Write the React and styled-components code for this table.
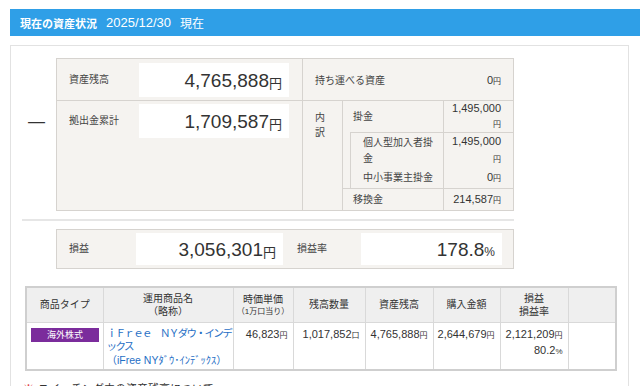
import React from "react";
import styled, { createGlobalStyle } from "styled-components";

// Global
//
//

const GlobalStyle = createGlobalStyle`
  html, body {
    margin: 0;
    padding: 0;
    overflow: hidden;
    background: #fff;
  }
  body {
    font-family: "Liberation Sans", "Noto Sans CJK JP", sans-serif;
    color: #333;
  }
  * { box-sizing: border-box; }
`;

// Component Stylesheet
//
//

const Page = styled.div`
  padding: 9px 0 0 10px;
`;

const TitleBar = styled.div`
  height: 27px;
  background: #2f9fe7;
  color: #fff;
  display: flex;
  align-items: center;
  gap: 9px;
  padding-left: 10px;
  font-size: 12px;
  b { font-weight: bold; font-size: 11px; }
  .date { font-size: 13px; }
`;

const Panel = styled.div`
  margin-top: 9px;
  width: 619px;
  border: 1px solid #e2e2e2;
  padding: 12px 0 30px 0;
`;

const TopSection = styled.div`
  display: flex;
`;

const MinusCol = styled.div`
  width: 45px;
  padding: 56px 0 0 6px;
  display: flex;
  justify-content: center;
  align-items: flex-start;
  font-size: 17px;
  line-height: 16px;
  color: #333;
`;

const SummaryTable = styled.div`
  width: 458px;
  border: 1px solid #d6d3cf;
  background: #f5f3f0;
  display: flex;
`;

const LeftGroup = styled.div`
  width: 246px;
  border-right: 1px solid #d6d3cf;
  display: flex;
  flex-direction: column;
`;

const SumRow = styled.div`
  display: flex;
  align-items: ${({ $top }) => ($top ? "flex-start" : "center")};
  height: ${({ $top }) => ($top ? "auto" : "42px")};
  flex: ${({ $top }) => ($top ? 1 : "none")};
  padding-top: ${({ $top }) => ($top ? "3px" : "0")};
  border-bottom: ${({ $top }) => ($top ? "none" : "1px solid #d6d3cf")};
`;

const Label = styled.div`
  width: ${({ $w }) => $w}px;
  padding-left: 12px;
  font-size: 10px;
  line-height: ${({ $lh }) => $lh || 14}px;
  color: #444;
`;

const ValueBox = styled.div`
  width: ${({ $w }) => $w}px;
  height: ${({ $h }) => $h}px;
  background: #fff;
  display: flex;
  align-items: center;
  justify-content: flex-end;
  padding: 2px 7px 0 0;
  font-size: 19px;
  color: #333;
  .unit {
    font-size: 13px;
    margin-top: 3px;
  }
`;

const RightGroup = styled.div`
  flex: 1;
  display: flex;
  flex-direction: column;
`;

const PortableRow = styled.div`
  height: 42px;
  border-bottom: 1px solid #d6d3cf;
  display: flex;
  align-items: center;
  justify-content: space-between;
  padding: 0 12px;
  font-size: 10px;
  color: #444;
`;

const SmallNum = styled.span`
  font-size: 11px;
  color: #333;
  .unit { font-size: 8px; }
`;

const Breakdown = styled.div`
  flex: 1;
  display: flex;
`;

const BreakdownHead = styled.div`
  width: 40px;
  border-right: 1px solid #d6d3cf;
  padding: 9px 0 0 12px;
  font-size: 10px;
  line-height: 15px;
  color: #444;
`;

const BreakdownBody = styled.div`
  flex: 1;
  display: flex;
  flex-direction: column;
`;

const SubBlock = styled.div`
  margin-left: 7px;
  border-left: 1px solid #d6d3cf;
  border-top: 1px solid #d6d3cf;
`;

const BRow = styled.div`
  display: flex;
  align-items: stretch;
  height: ${({ $h }) => $h}px;
  border-top: ${({ $line }) => ($line ? "1px solid #d6d3cf" : "none")};
`;

const BLabel = styled.div`
  flex: 1;
  display: flex;
  align-items: center;
  padding: 0 6px 0 ${({ $pad }) => $pad}px;
  font-size: 10px;
  line-height: 16px;
  color: #444;
`;

const BValue = styled.div`
  width: 70px;
  border-left: 1px solid #d6d3cf;
  display: flex;
  align-items: center;
  justify-content: flex-end;
  padding: 0 12px 0 6px;
  font-size: 11px;
  line-height: ${({ $lh }) => $lh || 15}px;
  color: #333;
  > span {
    display: block;
    width: 100%;
    text-align: right;
  }
  .unit { font-size: 8px; }
`;

const Separator = styled.div`
  margin: 8px 0 0 11px;
  width: 492px;
  border-top: 2px solid #e6e6e6;
`;

const ProfitRow = styled.div`
  margin: 8px 0 0 45px;
  width: 458px;
  height: 40px;
  border: 1px solid #d6d3cf;
  background: #f5f3f0;
  display: flex;
  align-items: center;
`;

const ProfitRateLabel = styled(Label)`
  margin-left: 14px;
  padding-left: 0;
`;

const ProductTable = styled.table`
  margin: 17px 0 0 14px;
  width: 590px;
  border-collapse: collapse;
  table-layout: fixed;
  border: 2px solid #cfcfcf;

  th {
    height: 35px;
    background: #efefef;
    border: 1px solid #d9d9d9;
    font-size: 10px;
    font-weight: normal;
    line-height: 13px;
    color: #333;
    padding: 0 2px;
  }
  th small {
    display: block;
    font-size: 8px;
    line-height: 11px;
  }
  td {
    height: 48px;
    border: 1px solid #d9d9d9;
    vertical-align: top;
    font-size: 11px;
    line-height: 15px;
    padding: 4px 5px 0 4px;
    text-align: right;
    color: #333;
  }
  td .unit { font-size: 8px; }
`;

const Badge = styled.div`
  width: 68px;
  height: 14px;
  margin: 1px auto 0;
  background: #7b2c9c;
  color: #fff;
  font-size: 9px;
  line-height: 14px;
  text-align: center;
`;

const FundName = styled.td`
  && {
    text-align: left;
    padding: 4px 0 0 3px;
    font-size: 10.5px;
    line-height: 13.5px;
    color: #1f6fc5;
  }
  .name {
    letter-spacing: -1.6px;
  }
`;

const Note = styled.div`
  margin: 9px 0 0 12px;
  font-size: 11px;
  color: #333;
  .mark {
    color: #e03a3a;
    margin-right: 4px;
  }
`;

// Component declaration
//
//

const Unit = ({ children, size }) => (
  <span className="unit" style={size ? { fontSize: size } : undefined}>{children}</span>
);

export default function App() {
  return (
    <Page>
      <GlobalStyle />
      <TitleBar>
        <b>現在の資産状況</b>
        <span className="date">2025/12/30</span>
        <span>現在</span>
      </TitleBar>
      <Panel>
        <TopSection>
          <MinusCol>—</MinusCol>
          <SummaryTable>
            <LeftGroup>
              <SumRow>
                <Label $w={82}>資産残高</Label>
                <ValueBox $w={150} $h={34}>4,765,888<Unit>円</Unit></ValueBox>
              </SumRow>
              <SumRow $top>
                <Label $w={82} $lh={34}>拠出金累計</Label>
                <ValueBox $w={150} $h={34}>1,709,587<Unit>円</Unit></ValueBox>
              </SumRow>
            </LeftGroup>
            <RightGroup>
              <PortableRow>
                <span>持ち運べる資産</span>
                <SmallNum>0<Unit>円</Unit></SmallNum>
              </PortableRow>
              <Breakdown>
                <BreakdownHead>内<br />訳</BreakdownHead>
                <BreakdownBody>
                  <BRow $h={31}>
                    <BLabel $pad={10}>掛金</BLabel>
                    <BValue><span>1,495,000<Unit>円</Unit></span></BValue>
                  </BRow>
                  <SubBlock>
                    <BRow $h={35}>
                      <BLabel $pad={12}>個人型加入者掛金</BLabel>
                      <BValue $lh={17}><span>1,495,000<Unit>円</Unit></span></BValue>
                    </BRow>
                    <BRow $h={20}>
                      <BLabel $pad={12}>中小事業主掛金</BLabel>
                      <BValue><span>0<Unit>円</Unit></span></BValue>
                    </BRow>
                  </SubBlock>
                  <BRow $h={22} $line>
                    <BLabel $pad={10}>移換金</BLabel>
                    <BValue><span>214,587<Unit>円</Unit></span></BValue>
                  </BRow>
                </BreakdownBody>
              </Breakdown>
            </RightGroup>
          </SummaryTable>
        </TopSection>

        <Separator />

        <ProfitRow>
          <Label $w={79}>損益</Label>
          <ValueBox $w={147} $h={32}>3,056,301<Unit>円</Unit></ValueBox>
          <ProfitRateLabel $w={64}>損益率</ProfitRateLabel>
          <ValueBox $w={141} $h={32}>178.8<Unit size="12px">%</Unit></ValueBox>
        </ProfitRow>

        <ProductTable>
          <colgroup>
            <col style={{ width: 77 }} />
            <col style={{ width: 130 }} />
            <col style={{ width: 60 }} />
            <col style={{ width: 72 }} />
            <col style={{ width: 68 }} />
            <col style={{ width: 67 }} />
            <col style={{ width: 68 }} />
            <col style={{ width: 48 }} />
          </colgroup>
          <thead>
            <tr>
              <th>商品タイプ</th>
              <th>運用商品名<br />（略称）</th>
              <th>時価単価<small>（1万口当り）</small></th>
              <th>残高数量</th>
              <th>資産残高</th>
              <th>購入金額</th>
              <th>損益<br />損益率</th>
              <th></th>
            </tr>
          </thead>
          <tbody>
            <tr>
              <td><Badge>海外株式</Badge></td>
              <FundName>
                <span className="name">ｉＦｒｅｅ　ＮＹダウ・インデックス</span><br />
                （iFree NYﾀﾞｳ･ｲﾝﾃﾞｯｸｽ）
              </FundName>
              <td>46,823<Unit>円</Unit></td>
              <td>1,017,852<Unit>口</Unit></td>
              <td>4,765,888<Unit>円</Unit></td>
              <td>2,644,679<Unit>円</Unit></td>
              <td>2,121,209<Unit>円</Unit><br />80.2<Unit>%</Unit></td>
              <td></td>
            </tr>
          </tbody>
        </ProductTable>

        <Note><span className="mark">※</span>スイッチング中の資産残高について</Note>
      </Panel>
    </Page>
  );
}
